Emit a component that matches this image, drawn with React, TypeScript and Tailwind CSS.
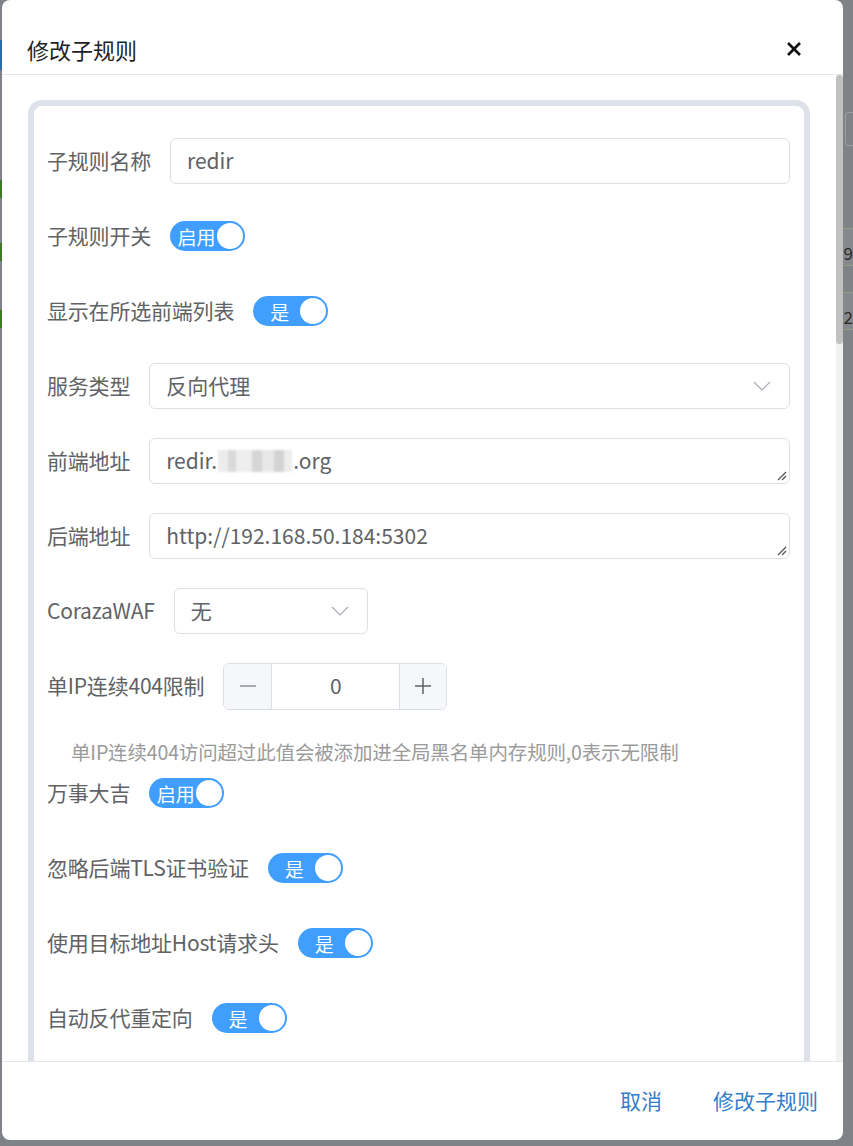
import type { ReactNode } from "react";

const FONT = { fontFamily: '"Noto Sans CJK SC", "Noto Sans", sans-serif' };

// Inline-prompt switch, always "on"
function Toggle({ text }: { text: string }) {
  return (
    <div className="flex h-[30px] w-[75px] shrink-0 items-center rounded-full bg-[#409eff] pr-[2px]">
      <span className="flex flex-1 justify-center pl-[6px] text-[19px] leading-none text-white">{text}</span>
      <span className="h-[26px] w-[26px] rounded-full bg-white" />
    </div>
  );
}

function Chevron() {
  return (
    <svg width="18" height="10" viewBox="0 0 18 10" fill="none" className="shrink-0">
      <polyline points="1,1 9,9 17,1" stroke="#a8abb2" strokeWidth="1.2" />
    </svg>
  );
}

function ResizeGrip() {
  return (
    <svg width="10" height="10" viewBox="0 0 10 10" className="absolute bottom-[2px] right-[2px]">
      <line x1="1" y1="9" x2="9" y2="1" stroke="#555" strokeWidth="1.2" />
      <line x1="5" y1="9" x2="9" y2="5" stroke="#555" strokeWidth="1.2" />
    </svg>
  );
}

function Row({ label, children }: { label: string; children: ReactNode }) {
  return (
    <div className="flex h-[46px] items-center gap-[19px]">
      <span className="shrink-0 whitespace-nowrap text-[21px] tracking-[-0.2px] text-[#606266]">{label}</span>
      {children}
    </div>
  );
}

const boxCls = "flex h-[46px] items-center rounded-[6px] border border-[#dcdfe6] bg-white px-[16px] text-[21px] text-[#606266]";

export default function App() {
  return (
    <div className="relative h-[1146px] w-[853px] overflow-hidden bg-[#7f8287] pl-[2px]" style={FONT}>
      {/* page under the overlay */}
      <div className="absolute left-0 top-[40px] h-[30px] w-[2px] bg-[#2d6aa8]" />
      <div className="absolute left-0 top-[180px] h-[18px] w-[2px] bg-[#3c7a2a]" />
      <div className="absolute left-0 top-[243px] h-[18px] w-[2px] bg-[#3c7a2a]" />
      <div className="absolute left-0 top-[310px] h-[18px] w-[2px] bg-[#3c7a2a]" />
      <div className="absolute right-0 top-[112px] h-[34px] w-[8px] rounded-l-[4px] border border-r-0 border-[#9a9da1]" />
      <div className="absolute right-0 top-[228px] h-[38px] w-[10px] border-y border-[#8ea07e] bg-[#85888c]" />
      <div className="absolute right-0 top-[292px] h-[38px] w-[10px] border-y border-[#8ea07e] bg-[#85888c]" />
      <span className="absolute right-0 top-[244px] text-[17px] leading-none text-[#2b2b2b]">9</span>
      <span className="absolute right-0 top-[308px] text-[17px] leading-none text-[#2b2b2b]">92</span>

      {/* dialog */}
      <div className="relative flex h-[1140px] w-[841px] flex-col overflow-hidden rounded-[8px] bg-white">
        <header className="flex h-[75px] shrink-0 items-center justify-between border-b border-[#e4e7ed] pl-[25px] pr-[41px] pt-[24px]">
          <h1 className="text-[22px] text-[#1f1f1f]">修改子规则</h1>
          <svg width="16" height="16" viewBox="0 0 16 16">
            <line x1="2" y1="2" x2="14" y2="14" stroke="#111" strokeWidth="2.6" />
            <line x1="14" y1="2" x2="2" y2="14" stroke="#111" strokeWidth="2.6" />
          </svg>
        </header>

        <div className="flex min-h-0 flex-1">
          <div className="flex-1 overflow-hidden px-[26px] pt-[25px]">
            <div className="rounded-[14px] border-[6px] border-[#dde1e9] pb-[40px] pl-[13px] pr-[14px] pt-[32px]">
              <div className="flex flex-col gap-[29px]">
                <Row label="子规则名称">
                  <div className={`${boxCls} flex-1`}>redir</div>
                </Row>
                <Row label="子规则开关">
                  <Toggle text="启用" />
                </Row>
                <Row label="显示在所选前端列表">
                  <Toggle text="是" />
                </Row>
                <Row label="服务类型">
                  <div className={`${boxCls} flex-1 justify-between pr-[18px]`}>
                    <span>反向代理</span>
                    <Chevron />
                  </div>
                </Row>
                <Row label="前端地址">
                  <div className={`${boxCls} relative flex-1`}>
                    <span>redir.</span>
                    <span className="mx-[1px] flex h-[22px] w-[74px] blur-[1.2px]">
                      <span className="w-[10px] bg-[#ececec]" />
                      <span className="w-[8px] bg-[#d9d9d9]" />
                      <span className="w-[16px] bg-[#eeeeee]" />
                      <span className="w-[10px] bg-[#d6d6d6]" />
                      <span className="w-[12px] bg-[#e8e8e8]" />
                      <span className="w-[10px] bg-[#d3d3d3]" />
                      <span className="w-[8px] bg-[#ededed]" />
                    </span>
                    <span>.org</span>
                    <ResizeGrip />
                  </div>
                </Row>
                <Row label="后端地址">
                  <div className={`${boxCls} relative flex-1`}>
                    http://192.168.50.184:5302
                    <ResizeGrip />
                  </div>
                </Row>
                <Row label="CorazaWAF">
                  <div className={`${boxCls} w-[194px] justify-between pr-[18px]`}>
                    <span>无</span>
                    <Chevron />
                  </div>
                </Row>
                <Row label="单IP连续404限制">
                  <div className="flex h-[47px] w-[224px] overflow-hidden rounded-[6px] border border-[#dcdfe6] text-[21px]">
                    <div className="flex w-[48px] items-center justify-center border-r border-[#dcdfe6] bg-[#f5f7fa]">
                      <span className="h-[1.5px] w-[16px] bg-[#a8abb2]" />
                    </div>
                    <div className="flex flex-1 items-center justify-center text-[#606266]">0</div>
                    <div className="flex w-[47px] items-center justify-center border-l border-[#dcdfe6] bg-[#f5f7fa]">
                      <svg width="18" height="18" viewBox="0 0 18 18">
                        <line x1="9" y1="1" x2="9" y2="17" stroke="#606266" strokeWidth="1.5" />
                        <line x1="1" y1="9" x2="17" y2="9" stroke="#606266" strokeWidth="1.5" />
                      </svg>
                    </div>
                  </div>
                </Row>
              </div>

              <p className="mt-[30px] h-[26px] whitespace-nowrap pl-[24px] text-[19.5px] leading-[26px] tracking-[-0.15px] text-[#9a9a9a]">
                单IP连续404访问超过此值会被添加进全局黑名单内存规则,0表示无限制
              </p>

              <div className="mt-[5px] flex flex-col gap-[29px]">
                <Row label="万事大吉">
                  <Toggle text="启用" />
                </Row>
                <Row label="忽略后端TLS证书验证">
                  <Toggle text="是" />
                </Row>
                <Row label="使用目标地址Host请求头">
                  <Toggle text="是" />
                </Row>
                <Row label="自动反代重定向">
                  <Toggle text="是" />
                </Row>
              </div>
            </div>
          </div>

          {/* scrollbar */}
          <div className="flex w-[7px] shrink-0 flex-col bg-[#f1f1f1]">
            <div className="h-[269px] rounded-full bg-[#c1c1c1]" />
          </div>
        </div>

        <footer className="flex h-[79px] shrink-0 items-center justify-end gap-[51px] border-t border-[#e4e7ed] pb-[1px] pr-[25px]">
          <span className="text-[21px] text-[#337ecc]">取消</span>
          <span className="text-[21px] text-[#337ecc]">修改子规则</span>
        </footer>
      </div>
    </div>
  );
}
